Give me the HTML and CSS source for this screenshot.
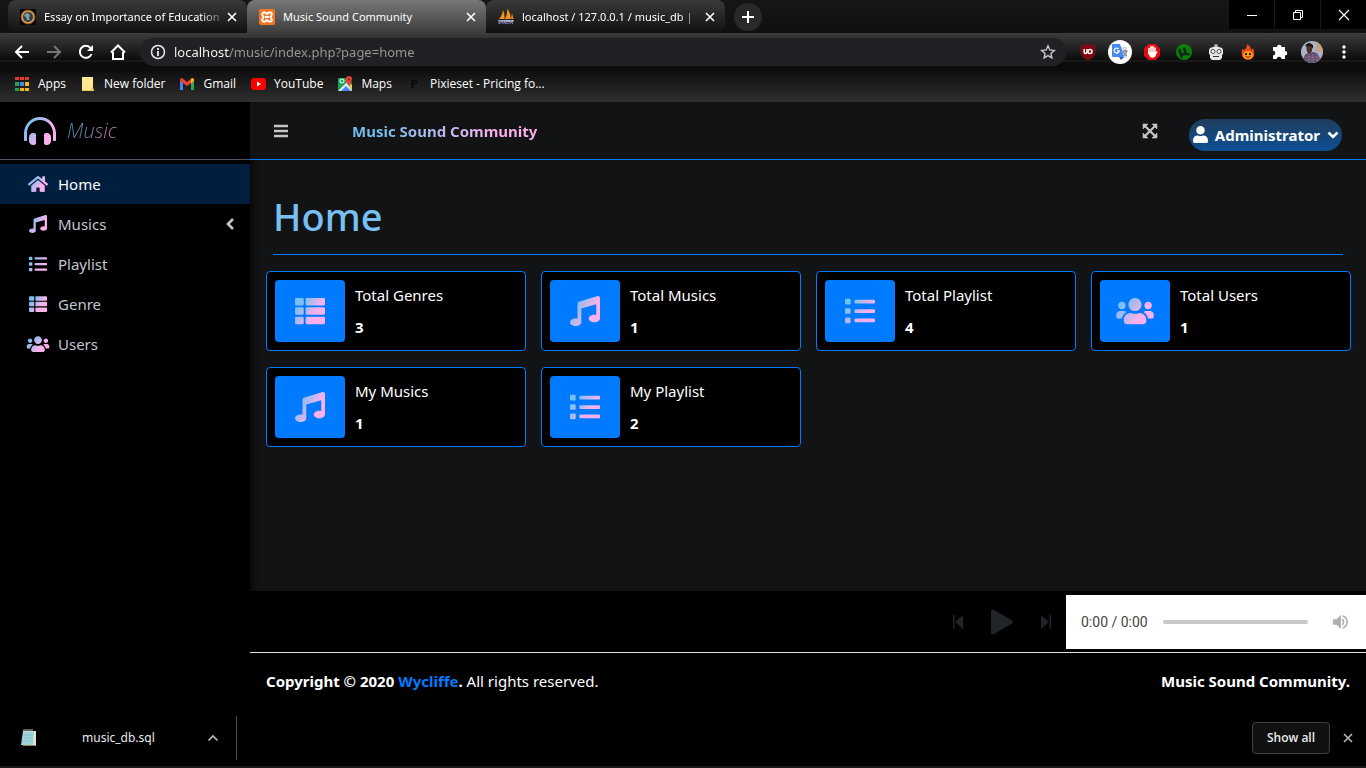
FILE: index.html
```html
<!DOCTYPE html>
<html lang="en">
<head>
<meta charset="utf-8">
<title>Music Sound Community</title>
<link rel="stylesheet" href="styles.css">
</head>
<body>
<svg class="defs" aria-hidden="true">
  <defs>
    <linearGradient id="duo" x1="0" y1="0.2" x2="1" y2="0.8"><stop offset="0.1" stop-color="#74c0f0"/><stop offset="0.7" stop-color="#ffb0ec"/></linearGradient>
    <symbol id="i-home" viewBox="0 0 576 512"><path d="M280.37 148.26L96 300.11V464a16 16 0 0 0 16 16l112.06-.29a16 16 0 0 0 15.92-16V368a16 16 0 0 1 16-16h64a16 16 0 0 1 16 16v95.64a16 16 0 0 0 16 16.05L464 480a16 16 0 0 0 16-16V300L295.67 148.26a12.19 12.19 0 0 0-15.3 0zM571.6 251.47L488 182.56V44.05a12 12 0 0 0-12-12h-56a12 12 0 0 0-12 12v72.61L318.47 43a48 48 0 0 0-61 0L4.34 251.47a12 12 0 0 0-1.6 16.9l25.5 31A12 12 0 0 0 45.15 301l235.22-193.74a12.19 12.19 0 0 1 15.3 0L530.9 301a12 12 0 0 0 16.9-1.6l25.5-31a12 12 0 0 0-1.7-16.93z"/></symbol>
    <symbol id="i-music" viewBox="0 0 512 512"><path d="M511.99 32.01c0-21.71-21.1-37.01-41.6-30.51L150.4 96c-13.3 4.2-22.4 16.5-22.4 30.5v261.42c-10.05-2.38-20.72-3.92-32-3.92-53.02 0-96 28.65-96 64s42.98 64 96 64 96-28.65 96-64V214.31l256-75.02v184.63c-10.05-2.38-20.72-3.92-32-3.92-53.02 0-96 28.65-96 64s42.98 64 96 64 96-28.65 96-64l-.01-351.99z"/></symbol>
    <symbol id="i-list" viewBox="0 0 512 512"><path d="M16 48H80a16 16 0 0 1 16 16V128a16 16 0 0 1-16 16H16a16 16 0 0 1-16-16V64A16 16 0 0 1 16 48zM16 208H80a16 16 0 0 1 16 16V288a16 16 0 0 1-16 16H16a16 16 0 0 1-16-16V224A16 16 0 0 1 16 208zM16 368H80a16 16 0 0 1 16 16V448a16 16 0 0 1-16 16H16a16 16 0 0 1-16-16V384A16 16 0 0 1 16 368zM176 64H496a16 16 0 0 1 16 16V112a16 16 0 0 1-16 16H176a16 16 0 0 1-16-16V80A16 16 0 0 1 176 64zM176 224H496a16 16 0 0 1 16 16V272a16 16 0 0 1-16 16H176a16 16 0 0 1-16-16V240A16 16 0 0 1 176 224zM176 384H496a16 16 0 0 1 16 16V432a16 16 0 0 1-16 16H176a16 16 0 0 1-16-16V400A16 16 0 0 1 176 384z"/></symbol>
    <symbol id="i-thlist" viewBox="0 0 512 512"><path d="M24 32H125a24 24 0 0 1 24 24V136a24 24 0 0 1-24 24H24a24 24 0 0 1-24-24V56A24 24 0 0 1 24 32zM24 192H125a24 24 0 0 1 24 24V296a24 24 0 0 1-24 24H24a24 24 0 0 1-24-24V216A24 24 0 0 1 24 192zM24 352H125a24 24 0 0 1 24 24V456a24 24 0 0 1-24 24H24a24 24 0 0 1-24-24V376A24 24 0 0 1 24 352zM205 32H488a24 24 0 0 1 24 24V136a24 24 0 0 1-24 24H205a24 24 0 0 1-24-24V56A24 24 0 0 1 205 32zM205 192H488a24 24 0 0 1 24 24V296a24 24 0 0 1-24 24H205a24 24 0 0 1-24-24V216A24 24 0 0 1 205 192zM205 352H488a24 24 0 0 1 24 24V456a24 24 0 0 1-24 24H205a24 24 0 0 1-24-24V376A24 24 0 0 1 205 352z"/></symbol>
    <symbol id="i-users" viewBox="0 0 640 512"><path d="M96 224c35.3 0 64-28.7 64-64s-28.7-64-64-64-64 28.7-64 64 28.7 64 64 64zm448 0c35.3 0 64-28.7 64-64s-28.7-64-64-64-64 28.7-64 64 28.7 64 64 64zm32 32h-64c-17.6 0-33.5 7.1-45.1 18.6 40.3 22.1 68.9 62 75.1 109.4h66c17.7 0 32-14.3 32-32v-32c0-35.3-28.7-64-64-64zm-256 0c61.9 0 112-50.1 112-112S381.9 32 320 32 208 82.1 208 144s50.1 112 112 112zm76.8 32h-8.3c-20.8 10-43.9 16-68.5 16s-47.6-6-68.5-16h-8.3C179.6 288 128 339.6 128 403.2V432c0 26.5 21.5 48 48 48h288c26.5 0 48-21.5 48-48v-28.8c0-63.6-51.6-115.2-115.2-115.2zm-223.7-13.4C161.5 263.1 145.6 256 128 256H64c-35.3 0-64 28.7-64 64v32c0 17.7 14.3 32 32 32h65.9c6.3-47.4 34.9-87.3 75.2-109.4z"/></symbol>
    <symbol id="i-x" viewBox="0 0 12 12"><path d="M2 2l8 8M10 2l-8 8" fill="none" stroke="currentColor" stroke-width="1.6"/></symbol>
  </defs>
</svg>

<header class="browser">
  <div class="tabstrip">
    <div class="tab">
      <svg class="ico16" viewBox="0 0 16 16"><rect width="16" height="16" fill="#090706"/><circle cx="8" cy="8" r="6" fill="#2c3c48" stroke="#d59a48" stroke-width="2"/><circle cx="8" cy="8" r="7" fill="none" stroke="#7a4a1e" stroke-width="1" stroke-dasharray="2 1"/><path d="M5 5l3-1 2 2-1 3 1 2-3 0-1-3-2-1z" fill="#8699a0"/></svg>
      <button class="tab-title fade">Essay on Importance of Education</button>
      <button class="tab-x" aria-label="Close tab"><svg><use href="#i-x"/></svg></button>
    </div>
    <div class="tab tab-active">
      <svg class="ico16" viewBox="0 0 16 16"><rect width="16" height="16" rx="2" fill="#f37623"/><path d="M4 3.5h2.500L8 5.200l1.500-1.700H12L13 5l-1.500 3L13 11l-1 1.500H9.500L8 10.800 6.500 12.500H4L3 11l1.500-3L3 5z" fill="none" stroke="#fff" stroke-width="1.800" stroke-linejoin="round"/><path d="M6 8h4" stroke="#fff" stroke-width="2"/></svg>
      <button class="tab-title">Music Sound Community</button>
      <button class="tab-x" aria-label="Close tab"><svg><use href="#i-x"/></svg></button>
    </div>
    <div class="tab">
      <svg class="ico16" viewBox="0 0 16 16"><path d="M1 10Q4 7 5 1q2 4 1.500 9zM7 10q2-4 2.500-10 4 5 3 10zM13 10l1-6 1.500 6z" fill="#f5921e"/><path d="M0 11h16l-1 2H1z" fill="#b9bad0"/><path d="M1 15v-3h2v2H1M5 15v-3l2 2 1-2v3M10 15v-3M12 15l1-3 2 3" fill="none" stroke="#777a9e" stroke-width="1.200"/></svg>
      <button class="tab-title fade">localhost / 127.0.0.1 / music_db |</button>
      <button class="tab-x" aria-label="Close tab"><svg><use href="#i-x"/></svg></button>
    </div>
    <button class="newtab" aria-label="New tab"><svg viewBox="0 0 12 12"><path d="M6 0v12M0 6h12" stroke="#fff" stroke-width="2"/></svg></button>
    <div class="winbtns">
      <button aria-label="Minimize"><svg viewBox="0 0 12 12"><path d="M1 6.500h10" stroke="#fff"/></svg></button>
      <button aria-label="Restore"><svg viewBox="0 0 12 12"><path d="M1.500 3.500h7v7h-7zM3.500 3.500v-2h7v7h-2" fill="none" stroke="#fff"/></svg></button>
      <button aria-label="Close"><svg viewBox="0 0 12 12"><path d="M1 1l10 10M11 1L1 11" stroke="#fff" stroke-width="1.200"/></svg></button>
    </div>
  </div>

  <div class="toolbar">
    <button aria-label="Back"><svg viewBox="0 0 16 16"><path d="M15 8H2M8 2L2 8l6 6" fill="none" stroke="#fff" stroke-width="2"/></svg></button>
    <button aria-label="Forward"><svg viewBox="0 0 16 16"><path d="M1 8h13M8 2l6 6-6 6" fill="none" stroke="#777" stroke-width="2"/></svg></button>
    <button aria-label="Reload"><svg viewBox="0 0 16 16"><path d="M13.500 10A6 6 0 1 1 12.500 4" fill="none" stroke="#fff" stroke-width="2"/><path d="M15 1v6H9z" fill="#fff"/></svg></button>
    <button aria-label="Home page"><svg viewBox="0 0 16 16"><path d="M3 8v7h10V8M1 8.500L8 1.500l7 7" fill="none" stroke="#fff" stroke-width="2"/></svg></button>
    <div class="omnibox">
      <svg class="ico16" viewBox="0 0 16 16"><circle cx="8" cy="8" r="6.500" fill="none" stroke="#e8eaed" stroke-width="1.500"/><path d="M8 7v5M8 4v2" stroke="#e8eaed" stroke-width="1.800"/></svg>
      <input class="url" type="text" aria-label="Address" value="localhost/music/index.php?page=home">
      <button aria-label="Bookmark this page"><svg viewBox="0 0 16 16"><path d="M8 1.800l1.800 4.200 4.600.400-3.500 3 1 4.500L8 11.600l-3.900 2.300 1-4.500-3.500-3 4.600-.400z" fill="none" stroke="#d0d2d5" stroke-width="1.300"/></svg></button>
    </div>
    <div class="exts">
      <button aria-label="uBlock"><svg viewBox="0 0 24 24"><path d="M12 4l7 2v7q0 4-7 7-7-3-7-7V6z" fill="#800610" stroke="#5c2020"/><path d="M8.200 9v3q0 1.500 1.400 1.500T11 12V9" fill="none" stroke="#fff" stroke-width="1.500"/><circle cx="14" cy="11.400" r="2" fill="none" stroke="#fff" stroke-width="1.500"/></svg></button>
      <button aria-label="Translate"><svg viewBox="0 0 24 24"><circle cx="12" cy="12" r="12" fill="#fff"/><path d="M11 7h8v11h-6z" fill="#dcdcdc"/><path d="M4 4h8l4 13H5q-1 0-1-1z" fill="#4688f1"/><path d="M11 17h5l-3 3z" fill="#2a56c6"/><path d="M10.500 8.800A2.500 2.500 0 1 0 11.200 10.800H9" fill="none" stroke="#fff" stroke-width="1.300"/><path d="M14.500 11h5M17 10v1M15.500 16q3-2 3-5M15.500 12q1 3 3.500 4" fill="none" stroke="#607080"/></svg></button>
      <button aria-label="Ad blocker"><svg viewBox="0 0 24 24"><path d="M8.500 4h7L20 8.500v7L15.500 20h-7L4 15.500v-7z" fill="#e40d0d"/><path d="M9 14V8.500M11 12V6.500M13 12V6.500M15 13V8" stroke="#fff" stroke-width="1.600" stroke-linecap="round"/><path d="M8.300 12h7.500l1-1 .500 1-2 4.500q-3 2.500-5.500 0z" fill="#fff"/></svg></button>
      <button aria-label="Torrent"><svg viewBox="0 0 24 24"><circle cx="12" cy="12" r="8" fill="#078207"/><path d="M7 9l3 9M8.300 12.500q1 2.500 3 2t1.700-3L12 7.500M13 12q1 3 4.500 2" fill="none" stroke="#14251a" stroke-width="2.400"/></svg></button>
      <button aria-label="Robot"><svg viewBox="0 0 24 24"><circle cx="12" cy="6" r="2" fill="#aaa"/><path d="M6 8q6-3 12 0l1 2v4l-1 1v3l-2 2H8l-2-2v-3l-1-1v-4z" fill="#e8e8e8"/><circle cx="9" cy="11.500" r="2" fill="#fff" stroke="#444"/><circle cx="15" cy="11.500" r="2" fill="#fff" stroke="#444"/><path d="M9 16.500h6" stroke="#333"/></svg></button>
      <button aria-label="Flame"><svg viewBox="0 0 24 24"><path d="M11 4q4 2 4 6l2-2q2 4 1 8-2 4-6 4t-6-4q-1-4 0-7l2 1q3-2 3-6z" fill="#ec4a13"/><ellipse cx="12" cy="15" rx="5" ry="4" fill="#f9a11b"/><path d="M9 14h2M13 14h2" stroke="#401800" stroke-width="1.800"/><path d="M9.500 16q2.500 3 5 0" fill="none" stroke="#702000"/></svg></button>
      <button aria-label="Extensions"><svg viewBox="0 0 24 24"><path d="M5 7h4a2.300 2.300 0 0 1 4.600 0H17v4a2.300 2.300 0 0 1 0 4.600V19h-3.600a2.300 2.300 0 0 0-4.600 0H5v-3.600a2.300 2.300 0 0 0 0-4.600z" fill="#fff"/></svg></button>
      <button aria-label="Profile"><svg viewBox="0 0 24 24"><defs><clipPath id="face"><circle cx="12" cy="12" r="11"/></clipPath></defs><g clip-path="url(#face)"><rect width="24" height="24" fill="#a9b4c8"/><rect x="16" width="8" height="12" fill="#c2a184"/><path d="M3 24q-1-9 5-11l6-1q7 2 6 12z" fill="#604c70"/><path d="M4 17h17M4 20h17M9 14v11M13 14v11M17 14v11" stroke="#a08090" stroke-width=".6"/><path d="M6 5q3-4 6 0v6q-2 4-5 1z" fill="#4a3028"/><path d="M5 6q3-5 8-1l0 4-2-3-5 0z" fill="#181212"/></g></svg></button>
      <button aria-label="Menu"><svg viewBox="0 0 24 24"><circle cx="12" cy="7" r="1.700" fill="#fff"/><circle cx="12" cy="12" r="1.700" fill="#fff"/><circle cx="12" cy="17" r="1.700" fill="#fff"/></svg></button>
    </div>
  </div>

  <nav class="bookmarks" aria-label="Bookmarks">
    <a href="#"><svg class="ico16" viewBox="0 0 16 16"><path d="M1 1h4v3H1zM6 1h4v3H6zM11 1h4v3h-4z" fill="#e33b2e"/><path d="M1 6h4v4H1zM1 12h4v3H1z" fill="#22a455"/><path d="M6 6h4v4H6z" fill="#3f87f5"/><path d="M11 6h4v4h-4zM6 12h4v3H6zM11 12h4v3h-4z" fill="#f7b912"/></svg>Apps</a>
    <a href="#"><svg class="ico16" viewBox="0 0 16 16"><path d="M2 1h11v11l1 3H2z" fill="#ffe794"/><path d="M2 14h9l1-3 1 1 1 3H2z" fill="#edc95d"/></svg>New folder</a>
    <a href="#"><svg class="ico16" viewBox="0 0 16 16"><path d="M1 4v10h3V7z" fill="#4285f4"/><path d="M12 7v7h3V4z" fill="#34a853"/><path d="M1 3l2-1 5 4 5-4 2 1v2L8 10 1 5z" fill="#ea4335"/><path d="M12 3l1-1 2 1v2l-3 2.500z" fill="#fbbc04"/></svg>Gmail</a>
    <a href="#"><svg class="ico16" viewBox="0 0 16 16"><rect x="1" y="2" width="15" height="12" rx="3" fill="#f00"/><path d="M7 5.500v5L11 8z" fill="#fff"/></svg>YouTube</a>
    <a href="#"><svg class="ico16" viewBox="0 0 16 16"><path d="M1 2h9l5 5v8H1z" fill="#1da261"/><path d="M1 15L10 6l5 9z" fill="#e9e9e9"/><path d="M4 15l5-5 5 5z" fill="#4285f4"/><path d="M12 8l3 1v6z" fill="#ffce44"/><circle cx="5" cy="5" r="2" fill="none" stroke="#fff"/><path d="M12 10q-4-4-3-7a3 3 0 0 1 6 0q0 3-3 7z" fill="#e34133"/><circle cx="12" cy="3.500" r="1" fill="#7d1f18"/></svg>Maps</a>
    <a href="#"><span class="letter-ico">P</span>Pixieset - Pricing fo...</a>
  </nav>
</header>

<div class="app">
  <aside class="sidebar">
    <a class="brand" href="#">
      <svg viewBox="0 0 512 512"><path d="M160 288h-16c-35.350 0-64 28.700-64 64.120v63.760c0 35.410 28.650 64.120 64 64.120h16c17.670 0 32-14.360 32-32.060V320.060c0-17.710-14.330-32.060-32-32.060zm208 0h-16c-17.670 0-32 14.350-32 32.060v127.880c0 17.700 14.330 32.060 32 32.060h16c35.350 0 64-28.710 64-64.120v-63.760c0-35.410-28.650-64.120-64-64.120zM256 32C112.910 32 4.570 151.130 0 288v112c0 8.840 7.160 16 16 16h16c8.840 0 16-7.160 16-16V288c0-114.670 93.330-207.800 208-207.820 114.670.020 208 93.150 208 207.820v112c0 8.840 7.160 16 16 16h16c8.840 0 16-7.160 16-16V288C507.430 151.130 399.090 32 256 32z"/></svg>
      <span class="brand-name">Music</span>
    </a>
    <nav class="menu">
      <a class="current" href="#"><svg><use href="#i-home"/></svg>Home</a>
      <a href="#"><svg><use href="#i-music"/></svg>Musics<svg class="angle" viewBox="0 0 10 14"><path d="M8 2L3 7l5 5" fill="none" stroke="#c2c7d0" stroke-width="2.600"/></svg></a>
      <a href="#"><svg><use href="#i-list"/></svg>Playlist</a>
      <a href="#"><svg><use href="#i-thlist"/></svg>Genre</a>
      <a href="#"><svg><use href="#i-users"/></svg>Users</a>
    </nav>
  </aside>

  <div class="page">
    <header class="topbar">
      <button class="plain" aria-label="Toggle sidebar"><svg viewBox="0 0 16 16"><path d="M1 3h14M1 8h14M1 13h14" stroke="#c5c5c5" stroke-width="2.400"/></svg></button>
      <a class="site" href="#">Music Sound Community</a>
      <button class="plain expand" aria-label="Full screen"><svg viewBox="0 0 16 16"><path d="M3 3l10 10M13 3L3 13" stroke="#c5c5c5" stroke-width="2.200"/><path d="M1 1h5L1 6zM15 1v5l-5-5zM1 15v-5l5 5zM15 15h-5l5-5z" fill="#c5c5c5" stroke="#c5c5c5" stroke-width=".6"/></svg></button>
      <button class="account"><svg class="person" viewBox="0 0 448 512"><path d="M224 256c70.700 0 128-57.300 128-128S294.700 0 224 0 96 57.300 96 128s57.300 128 128 128zm89.600 32h-16.700c-22.200 10.200-46.900 16-72.900 16s-50.600-5.800-72.900-16h-16.700C60.200 288 0 348.200 0 422.400V464c0 26.500 21.500 48 48 48h352c26.500 0 48-21.500 48-48v-41.600c0-74.200-60.200-134.400-134.400-134.400z" fill="#fff"/></svg>Administrator<svg class="caret" viewBox="0 0 12 12"><path d="M1.500 3.500L6 8l4.500-4.500" fill="none" stroke="#fff" stroke-width="2.600"/></svg></button>
    </header>

    <main class="content">
      <h1>Home</h1>
      <section class="cards">
        <article class="card"><div class="tile"><svg><use href="#i-thlist"/></svg></div><div class="info"><span>Total Genres</span><strong>3</strong></div></article>
        <article class="card"><div class="tile"><svg><use href="#i-music"/></svg></div><div class="info"><span>Total Musics</span><strong>1</strong></div></article>
        <article class="card"><div class="tile"><svg><use href="#i-list"/></svg></div><div class="info"><span>Total Playlist</span><strong>4</strong></div></article>
        <article class="card"><div class="tile wide"><svg><use href="#i-users"/></svg></div><div class="info"><span>Total Users</span><strong>1</strong></div></article>
        <article class="card"><div class="tile"><svg><use href="#i-music"/></svg></div><div class="info"><span>My Musics</span><strong>1</strong></div></article>
        <article class="card"><div class="tile"><svg><use href="#i-list"/></svg></div><div class="info"><span>My Playlist</span><strong>2</strong></div></article>
      </section>
    </main>

    <div class="player">
      <div class="controls">
        <button class="plain" aria-label="Previous"><svg viewBox="0 0 12 16"><path d="M1 1h1.500v14H1zM11 1v14L3 8z"/></svg></button>
        <button class="plain play" aria-label="Play"><svg viewBox="0 0 22 26"><path d="M3 1l18 10.500q1.500 1.500 0 3L3 25q-2 1-3-1V2q1-2 3-1z"/></svg></button>
        <button class="plain" aria-label="Next"><svg viewBox="0 0 12 16"><path d="M9.500 1H11v14H9.500zM1 1v14l8-7z"/></svg></button>
      </div>
      <div class="audio">
        <span>0:00 / 0:00</span>
        <input class="seek" type="range" min="0" max="100" value="0" aria-label="Seek">
        <button class="plain" aria-label="Mute"><svg viewBox="0 0 18 18"><path d="M1 6h4l5-5v16l-5-5H1z" fill="#b0b0b0"/><path d="M11.500 5.500q3 3.500 0 7M12 2q5 2 5 7t-5 7" fill="none" stroke="#b0b0b0" stroke-width="1.800"/></svg></button>
      </div>
    </div>

    <footer class="footer">
      <p><strong>Copyright © 2020 <a href="#">Wycliffe</a>.</strong> All rights reserved.</p>
      <strong>Music Sound Community.</strong>
    </footer>
  </div>
</div>

<div class="shelf">
  <div class="download">
    <svg class="note" viewBox="0 0 16 18"><path d="M4 2h12v14H4z" fill="#e9e4cf"/><path d="M3 2h11l-1 14H1z" fill="#9fd3dc"/><path d="M4 6h9M4 9h8M3 12h9" stroke="#86c0cb"/><path d="M3 16.500h13" stroke="#a9814d"/><path d="M4 0v3M6 0v3M8 0v3M10 0v3M12 0v3" stroke="#ddd" stroke-width=".9"/></svg>
    <button class="file">music_db.sql</button>
    <button class="plain" aria-label="Download options"><svg viewBox="0 0 12 12"><path d="M1.500 8.500L6 4l4.500 4.500" fill="none" stroke="#bbb" stroke-width="1.600"/></svg></button>
  </div>
  <button class="showall">Show all</button>
  <button class="shelf-x" aria-label="Close downloads"><svg><use href="#i-x"/></svg></button>
</div>
</body>
</html>
```
FILE: styles.css
```css
* { box-sizing: border-box; }
body {
  margin: 0;
  min-height: 100vh;
  display: flex;
  flex-direction: column;
  background: #000;
  color: #fff;
  font: 15px/24px "Noto Sans", "Open Sans", sans-serif;
}
button { margin: 0; padding: 0; border: 0; background: none; color: inherit; font: inherit; }
a { color: inherit; text-decoration: none; }
svg { display: block; flex: none; }
.defs { position: absolute; width: 0; height: 0; }
.ico16 { width: 16px; height: 16px; }

/* Browser frame */
.browser { font: 12px/16px "Open Sans", "Noto Sans", sans-serif; }
.tabstrip { display: flex; height: 33px; padding-left: 8px; background: linear-gradient(#161616, #101010); }
.tab {
  display: flex;
  align-items: center;
  width: 239px;
  padding: 0 9px 0 12px;
  border-radius: 8px;
  background: linear-gradient(#3a3a3a, #111);
}
.tab-active { border-radius: 8px 8px 0 0; background: linear-gradient(#787878, #3c3c3c); }
.tab-title {
  flex: 1;
  min-width: 0;
  margin-left: 8px;
  white-space: nowrap;
  text-align: left;
  font: 11px/16px "Noto Sans", "Open Sans", sans-serif;
}
.fade { mask-image: linear-gradient(90deg, #000 88%, rgba(0, 0, 0, 0.2)); }
.tab-x { display: flex; margin-left: 4px; }
.tab-x svg, .shelf-x svg { width: 12px; height: 12px; }
.newtab {
  display: grid;
  place-items: center;
  align-self: center;
  width: 28px;
  height: 28px;
  margin-left: 9px;
  border-radius: 50%;
  background: #292929;
}
.newtab svg { width: 12px; height: 12px; }
.winbtns { display: flex; gap: 1px; height: 29px; margin-left: auto; background: #181818; }
.winbtns button { display: grid; place-items: center; width: 45px; background: #000; }
.winbtns svg { width: 12px; height: 12px; }
.toolbar {
  display: flex;
  align-items: center;
  gap: 16px;
  height: 38px;
  padding: 0 10px 0 14px;
  background: linear-gradient(#3c3c3c, #0c0c0c 27px, #242424 28px, #0c0c0c 29px);
}
.toolbar > button svg { width: 16px; height: 16px; }
.omnibox {
  display: flex;
  flex: 1;
  align-items: center;
  gap: 8px;
  height: 28px;
  margin-left: -2px;
  padding: 0 10px;
  border-radius: 14px;
  background: #202124;
}
.omnibox button svg { width: 16px; height: 16px; }
.url {
  flex: 1;
  min-width: 0;
  padding: 0;
  border: 0;
  font: 13px/20px "Noto Sans", "Open Sans", sans-serif;
  color: transparent;
  background: linear-gradient(90deg, #fff 56px, #9a9a9a 56px) text;
}
.exts { display: flex; gap: 8px; margin-left: -6px; }
.exts svg { width: 24px; height: 24px; }
.bookmarks {
  display: flex;
  align-items: center;
  gap: 14px;
  height: 31px;
  padding: 0 14px 4px;
  border-bottom: 1px solid #2e2e2e;
  background: linear-gradient(#0f0f0f, #2e2e2e);
}
.bookmarks a { display: flex; align-items: center; gap: 8px; }
.letter-ico { width: 16px; color: #080808; font: bold 12px/16px "Liberation Serif", serif; text-align: center; }

/* Application */
.app { display: flex; flex: 1; }
.sidebar { width: 250px; border-top: 1px solid #000; }
.brand {
  display: flex;
  align-items: center;
  gap: 11px;
  height: 57px;
  padding: 0 24px;
  border-bottom: 1px solid #4b545c;
}
.brand svg { width: 32px; height: 34px; fill: url(#duo); }
.brand-name, .site {
  color: transparent;
  background: linear-gradient(90deg, #74c0f0 15%, #ffb0ec 80%) text;
}
.brand-name { opacity: 0.7; font: italic 300 20px/28px "Open Sans", "Noto Sans", sans-serif; }
.menu { padding-top: 4px; color: #c2c7d0; }
.menu a { display: flex; align-items: center; gap: 8px; height: 40px; padding: 0 15px 0 26px; }
.menu svg { width: 24px; height: 18px; fill: url(#duo); }
.menu .angle { width: 10px; height: 14px; margin-left: auto; }
.menu .current { background: #001f3f; color: #fff; }

.page { display: flex; flex: 1; flex-direction: column; min-width: 0; }
.topbar {
  display: flex;
  align-items: center;
  height: 58px;
  padding: 0 24px 0 23px;
  border-bottom: 1px solid #007bff;
  background: #121314;
}
.plain { display: flex; align-items: center; }
.plain svg { width: 16px; height: 16px; }
.site { margin-left: 63px; font-weight: 700; }
.expand { margin-left: auto; }
.account {
  display: flex;
  align-items: center;
  gap: 7px;
  height: 32px;
  margin: 8px 0 0 31px;
  padding: 0 3px 0 4px;
  border-radius: 16px;
  background: linear-gradient(#1f3d5c, #0d4f94);
  font-weight: 700;
}
.person { width: 15px; height: 17px; }
.caret { width: 12px; height: 12px; }
.content { flex: 1; padding: 32px 15px 0 16px; background: #121314; box-shadow: inset 12px 0 12px -12px #000; }
h1 {
  margin: 0 8px 16px 7px;
  padding-bottom: 14px;
  border-bottom: 1px solid #007bff;
  color: #78c0f2;
  font-size: 38px;
  font-weight: 500;
  line-height: 48px;
}
.cards { display: grid; grid-template-columns: repeat(4, 1fr); gap: 16px 15px; }
.card { display: flex; gap: 10px; padding: 8px; border: 1px solid #007bff; border-radius: 4px; background: #000; }
.tile { display: grid; place-items: center; width: 70px; height: 62px; border-radius: 4px; background: #007bff; }
.tile svg { width: 30px; height: 30px; fill: url(#duo); }
.tile.wide svg { width: 38px; }
.info { display: flex; flex-direction: column; gap: 8px; justify-content: center; }

.player { display: flex; align-items: center; justify-content: flex-end; height: 62px; border-bottom: 1px solid #dee2e6; }
.controls { display: flex; align-items: center; gap: 27px; margin-right: 14px; }
.controls svg { width: 12px; height: 16px; fill: #212529; }
.controls .play svg { width: 22px; height: 26px; }
.audio {
  display: flex;
  align-items: center;
  width: 300px;
  height: 54px;
  padding: 0 18px 0 15px;
  background: #fff;
  color: #444;
  font: 14px/20px Roboto, sans-serif;
}
.seek { flex: 1; min-width: 0; height: 4px; margin: 0 24px 0 15px; border-radius: 2px; background: #c8c8c8; appearance: none; }
.seek::-webkit-slider-thumb { appearance: none; width: 0; height: 0; }
.footer { display: flex; justify-content: space-between; padding: 16px; }
.footer p { margin: 0; }
.footer a { color: #007bff; }

.shelf {
  display: flex;
  align-items: center;
  height: 59px;
  padding-right: 12px;
  border-bottom: 2px solid #1c1a1c;
  font-size: 12px;
  line-height: 16px;
}
.download { display: flex; align-items: center; width: 237px; height: 44px; padding: 0 17px 0 20px; border-right: 1px solid #4c4c4c; }
.note { width: 16px; height: 18px; }
.file { margin: 0 auto 0 46px; color: #e8eaed; }
.download .plain svg { width: 12px; height: 12px; }
.showall { width: 78px; height: 32px; margin: 0 12px 0 auto; border: 1px solid #3c4043; border-radius: 4px; background: #111; color: #e8eaed; font: 600 12px/16px "Open Sans", "Noto Sans", sans-serif; }
.shelf-x { color: #bbb; }
```
